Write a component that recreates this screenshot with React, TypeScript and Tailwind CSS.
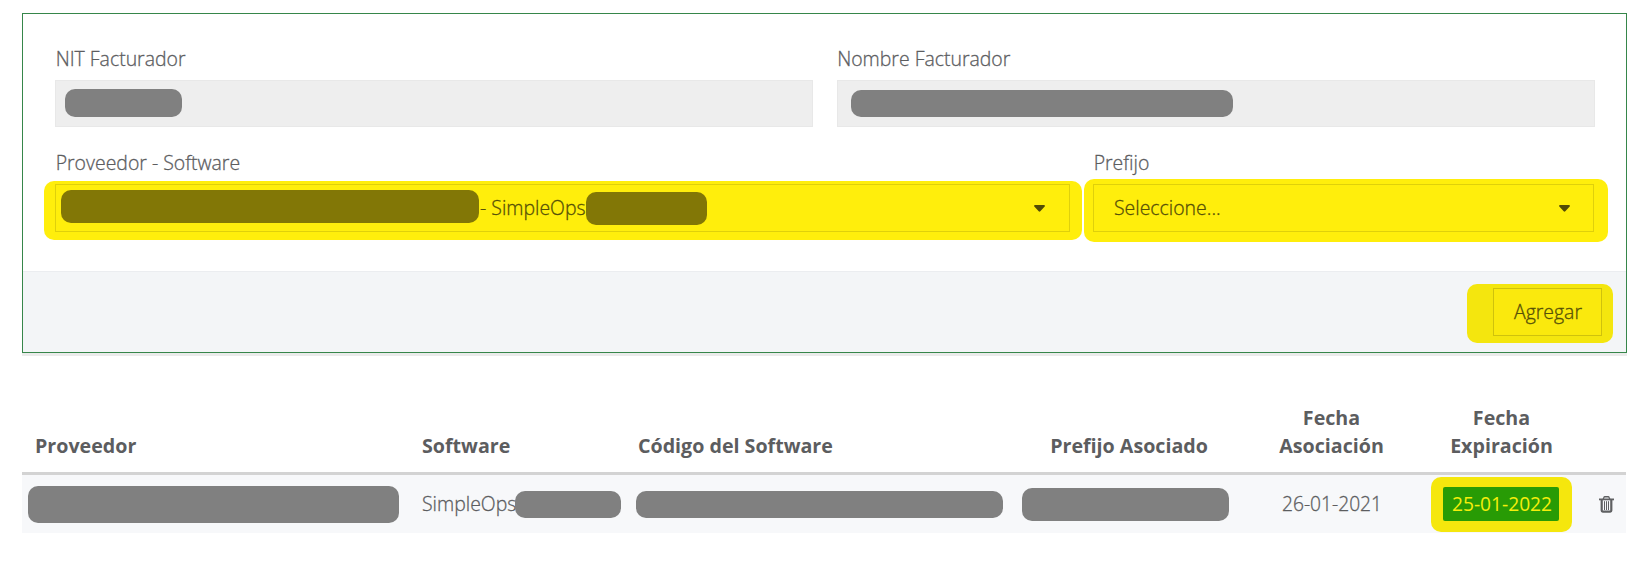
import React from "react";

function Caret() {
  return (
    <svg className="h-[7px] w-[11px]" viewBox="0 0 11 7" fill="#524b06">
      <path d="M1 0h9a.9.9 0 0 1 .7 1.5L6.3 6.3a1.1 1.1 0 0 1-1.6 0L.3 1.5A.9.9 0 0 1 1 0z" />
    </svg>
  );
}

function Trash() {
  return (
    <svg className="h-[17px] w-[15px]" viewBox="0 0 15 17" fill="none" stroke="#5f6062">
      <path d="M4.200 3 5 1.300Q5.200.8 5.800.8h3.400q.6 0 .8.500L10.800 3" strokeWidth="1.400" />
      <path d="M0 3.400h15" strokeWidth="1.800" />
      <path d="M2.700 4v10.600q0 1 1 1h7.600q1 0 1-1V4" strokeWidth="2.200" />
      <path d="M5.500 5.200v8.800M7.500 5.200v8.800M9.500 5.200v8.800" strokeWidth="1" />
    </svg>
  );
}

function Field({ label, children }: { label: string; children: React.ReactNode }) {
  return (
    <div>
      <label className="block h-[35px] pl-[0.7px] leading-7">{label}</label>
      {children}
    </div>
  );
}

export default function App() {
  return (
    <main className="h-[567px] w-[1650px] bg-white pt-[13px] pl-[22px] font-['Open_Sans',sans-serif] text-[19.45px] leading-7 font-light text-[#5c5d5f] [-webkit-text-stroke:0.3px_currentColor]">
      <section className="flex h-[340px] w-[1605px] flex-col border border-[#36864a] bg-white shadow-[0_3px_0_#ebebeb]">
        <div className="h-[257px] px-8 pt-[31px]">
          <div className="grid grid-cols-2 gap-6">
            <Field label="NIT Facturador">
              <div className="h-[47px] w-[758px] border border-[#e8e8e8] bg-[#eeeeee] pt-2 pl-[9px]">
                <div className="h-7 w-[117px] rounded-[10px] bg-[#808080]" />
              </div>
            </Field>
            <Field label="Nombre Facturador">
              <div className="h-[47px] w-[758px] border border-[#e8e8e8] bg-[#eeeeee] pt-[9px] pl-[13px]">
                <div className="h-[27px] w-[382px] rounded-[10px] bg-[#808080]" />
              </div>
            </Field>
          </div>

          <div className="isolate mt-[22px] flex gap-[23px]">
            <Field label="Proveedor - Software">
              <div className="relative flex h-12 w-[1015px] border border-[#dfd00b] text-[#565007]">
                <div className="absolute -top-1 -right-[13px] -bottom-[9px] -left-3 -z-10 rounded-[10px] bg-[#ffee0c]" />
                <div className="mt-[5px] ml-[5px] h-[33px] w-[418px] rounded-[10px] bg-[#827706]" />
                <span className="ml-px w-[106px] pt-[9px] whitespace-nowrap">- SimpleOps</span>
                <div className="mt-[7px] h-[33px] w-[121px] rounded-[10px] bg-[#827706]" />
                <span className="mt-5 mr-6 ml-auto"><Caret /></span>
              </div>
            </Field>
            <Field label="Prefijo">
              <div className="relative flex h-12 w-[501px] justify-between border border-[#dfd00b] text-[#565007]">
                <div className="absolute -top-1.5 -right-[15px] -bottom-[11px] -left-[10px] -z-10 rounded-[10px] bg-[#ffee0c]" />
                <span className="pt-[9px] pl-5">Seleccione...</span>
                <span className="mt-5 mr-[23px]"><Caret /></span>
              </div>
            </Field>
          </div>
        </div>

        <div className="flex flex-1 justify-end border-t border-[#ebedf0] bg-[#f3f5f7] pt-3 pr-[13px]">
          <div className="h-[59px] w-[146px] rounded-[10px] bg-[#f4e60e] pt-1 pl-[26px]">
            <button className="block h-12 w-[109px] border border-[#cfc20c] bg-[#fae90d] pl-px text-[#565007]">Agregar</button>
          </div>
        </div>
      </section>

      <table className="mt-[46px] w-[1604px] table-fixed border-collapse">
        <colgroup>
          <col className="w-[386px]" />
          <col className="w-[216px]" />
          <col className="w-[394px]" />
          <col className="w-[216px]" />
          <col className="w-[194px]" />
          <col className="w-[147px]" />
          <col className="w-[51px]" />
        </colgroup>
        <thead>
          <tr className="h-[74px] align-bottom text-[19.65px] font-bold [-webkit-text-stroke:0] [&>th]:p-0 [&>th]:pb-3">
            <th><div className="pl-[13px] text-left">Proveedor</div></th>
            <th><div className="pl-[14px] text-left">Software</div></th>
            <th><div className="pl-[14px] text-left">Código del Software</div></th>
            <th><div className="pl-1.5">Prefijo Asociado</div></th>
            <th><div className="pl-px">Fecha<br />Asociación</div></th>
            <th>Fecha<br />Expiración</th>
            <th />
          </tr>
        </thead>
        <tbody>
          <tr className="h-[60px] border-t-[3px] border-[#d3d3d3] bg-[#f7f8fa] [&>td]:p-0 [&>td]:pt-px">
            <td><div className="ml-1.5 h-[37px] w-[371px] rounded-[10px] bg-[#808080]" /></td>
            <td>
              <div className="flex items-center pl-[14px]">
                <span className="w-[93px]">SimpleOps</span>
                <div className="h-[27px] w-[106px] rounded-[10px] bg-[#808080]" />
              </div>
            </td>
            <td><div className="ml-3 h-[27px] w-[367px] rounded-[10px] bg-[#808080]" /></td>
            <td><div className="ml-1 h-[33px] w-[207px] rounded-[10px] bg-[#808080]" /></td>
            <td className="text-center text-[19.2px]"><div className="pl-0.5">26-01-2021</div></td>
            <td>
              <div className="mx-auto flex h-[55px] w-[141px] rounded-[10px] bg-[#f5e70d] pt-[10px] pl-3">
                <span className="h-[34px] w-[116px] rounded-[2px] bg-[#289b05] pt-[3px] pl-0.5 text-center text-[19.2px] font-normal text-[#f5ee0c] [-webkit-text-stroke:0]">25-01-2022</span>
              </div>
            </td>
            <td><div className="flex justify-center pl-3"><Trash /></div></td>
          </tr>
        </tbody>
      </table>
    </main>
  );
}
